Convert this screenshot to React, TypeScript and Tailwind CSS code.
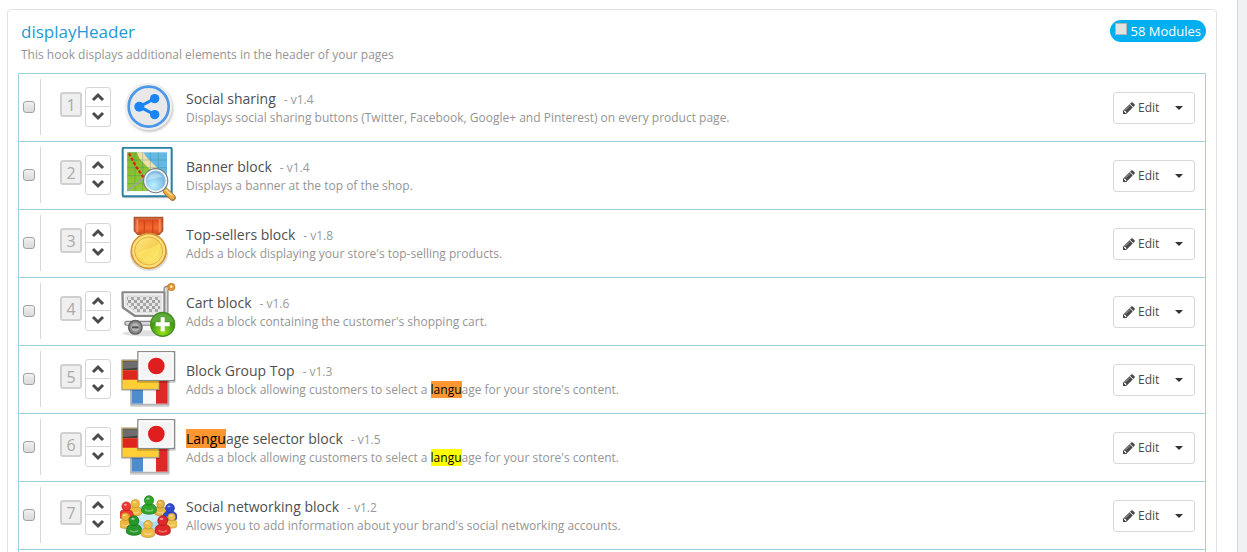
import type { ReactNode } from 'react';

function ShareIcon() {
  return (
    <svg viewBox="360 237 171 171" className="size-[57px] shrink-0" aria-hidden="true">
      <defs>
        <radialGradient id="shareHalo">
          <stop offset="0.86" stopColor="#cfcfcf" />
          <stop offset="1" stopColor="#ffffff" stopOpacity="0" />
        </radialGradient>
      </defs>
      <circle cx="449" cy="325" r="79" fill="url(#shareHalo)" />
      <circle cx="446" cy="320" r="71" fill="#f0eeec" />
      <circle cx="446" cy="320" r="60" fill="#e9e8e8" stroke="#4a98ea" strokeWidth="8" />
      <path d="M464 296L418 320L464 344" fill="none" stroke="#1a84f5" strokeWidth="9" />
      <circle cx="418" cy="320" r="15" fill="#1a84f5" />
      <circle cx="464" cy="296" r="14" fill="#1a84f5" />
      <circle cx="464" cy="344" r="14" fill="#1a84f5" />
    </svg>
  );
}

function MapIcon() {
  return (
    <svg viewBox="30 21 171 171" className="size-[57px] shrink-0" aria-hidden="true">
      <defs>
        <linearGradient id="mapLand" x1="0" y1="0" x2="1" y2="1">
          <stop offset="0" stopColor="#7fb52c" />
          <stop offset="1" stopColor="#9ed83a" />
        </linearGradient>
        <radialGradient id="mapLens" cx="0.4" cy="0.7">
          <stop offset="0" stopColor="#b9f1ff" />
          <stop offset="1" stopColor="#7dbbe6" />
        </radialGradient>
      </defs>
      <rect x="36" y="26" width="151" height="149" rx="5" fill="#000" opacity="0.2" />
      <rect x="38" y="23" width="147" height="146" rx="4" fill="#f7fcfd" stroke="#2b7fa1" strokeWidth="6" />
      <rect x="52" y="37" width="119" height="116" fill="#63b9e4" />
      <path d="M52 37H82C87 64 114 70 126 91C142 105 150 129 171 142V153H52Z" fill="url(#mapLand)" />
      <path d="M81 37H101C108 57 130 67 145 89L128 99C118 80 87 66 81 37Z" fill="#f1dfad" />
      <path d="M75 37V153M98 37V153M121 37V153M145 37V153M52 60H171M52 83H171M52 107H171M52 131H171" stroke="#277b69" strokeWidth="2" opacity="0.42" />
      <path d="M52 153L98 116L122 153" fill="none" stroke="#9da6a1" strokeWidth="5" />
      <path d="M57 40L78 79L100 112" fill="none" stroke="#d32b17" strokeWidth="7" strokeDasharray="10 5" />
      <path d="M157 144L170 157" stroke="#8b9297" strokeWidth="9" />
      <path d="M168 154L188 173" stroke="#a67a40" strokeWidth="19" strokeLinecap="round" />
      <path d="M168 153L187 171" stroke="#efac42" strokeWidth="14" strokeLinecap="round" />
      <path d="M168 150L184 165" stroke="#ffe0a0" strokeWidth="4" strokeLinecap="round" />
      <circle cx="137" cy="122" r="34" fill="url(#mapLens)" stroke="#7c8388" strokeWidth="8" />
      <circle cx="137" cy="122" r="32" fill="none" stroke="#eef2f4" strokeWidth="5" />
      <path d="M112 120C113 98 145 91 158 112C143 110 129 118 112 120Z" fill="#fff" opacity="0.35" />
    </svg>
  );
}

function MedalIcon() {
  return (
    <svg viewBox="30 21 171 171" className="size-[57px] shrink-0" aria-hidden="true">
      <defs>
        <linearGradient id="medalGold" x1="0" y1="0" x2="1" y2="1">
          <stop offset="0" stopColor="#ffe985" />
          <stop offset="0.5" stopColor="#f6cf55" />
          <stop offset="1" stopColor="#ffec72" />
        </linearGradient>
        <linearGradient id="medalRibbon" x1="0" y1="0" x2="0" y2="1">
          <stop offset="0" stopColor="#d94418" />
          <stop offset="0.6" stopColor="#f46a2d" />
          <stop offset="1" stopColor="#d84a1c" />
        </linearGradient>
      </defs>
      <ellipse cx="117" cy="137" rx="57" ry="52" fill="#000" opacity="0.13" />
      <path d="M73 28H158V68L148 79H83L73 68Z" fill="url(#medalRibbon)" stroke="#a8542f" strokeWidth="4" />
      <path d="M82 31V73M149 31V73" stroke="#f58a5c" strokeWidth="6" />
      <path d="M103 37V75M128 37V75" stroke="#cf451f" strokeWidth="4" />
      <path d="M75 32H156" stroke="#cf6740" strokeWidth="5" />
      <circle cx="116" cy="129" r="52" fill="#ffdf7b" stroke="#d59435" strokeWidth="5" />
      <circle cx="116" cy="129" r="42" fill="url(#medalGold)" stroke="#ddb04b" strokeWidth="3" />
      <path d="M81 137C99 121 127 124 151 105C151 158 105 186 81 137Z" fill="#fff06c" opacity="0.45" />
    </svg>
  );
}

function CartIcon() {
  return (
    <svg viewBox="30 21 171 171" className="size-[57px] shrink-0" aria-hidden="true">
      <defs>
        <pattern id="cartMesh" width="18" height="18" patternUnits="userSpaceOnUse">
          <rect width="18" height="18" fill="#e6e6e6" />
          <rect width="9" height="9" fill="#a0a0a0" />
          <rect x="9" y="9" width="9" height="9" fill="#a8a8a8" />
        </pattern>
        <radialGradient id="cartAdd" cx="0.5" cy="0.8">
          <stop offset="0" stopColor="#9ce51b" />
          <stop offset="1" stopColor="#3e9914" />
        </radialGradient>
      </defs>
      <ellipse cx="105" cy="172" rx="68" ry="9" fill="#000" opacity="0.12" />
      <path d="M50 142H128L168 108V38L183 32" fill="none" stroke="#858585" strokeWidth="15" strokeLinejoin="round" strokeLinecap="round" />
      <path d="M50 142H128L168 108V38L183 32" fill="none" stroke="#d8d8d8" strokeWidth="8" strokeLinejoin="round" strokeLinecap="round" />
      <path d="M38 50H162V119H74L39 94Z" fill="#cfcfcf" stroke="#888" strokeWidth="8" strokeLinejoin="round" />
      <path d="M43 54H158V114H77L44 91Z" fill="#e2e2e2" stroke="#f6f6f6" strokeWidth="4" />
      <path d="M51 62H150V108H78L51 86Z" fill="url(#cartMesh)" />
      <circle cx="184" cy="33" r="11" fill="#e59532" stroke="#b67325" strokeWidth="2" />
      <circle cx="184" cy="32" r="4" fill="#fff1c7" />
      <circle cx="76" cy="154" r="20" fill="#8d8d8d" stroke="#666" strokeWidth="5" />
      <circle cx="76" cy="154" r="12" fill="#b4b4b4" />
      <path d="M66 154H86" stroke="#555" strokeWidth="6" />
      <circle cx="158" cy="145" r="36" fill="url(#cartAdd)" stroke="#4b8d26" strokeWidth="4" />
      <path d="M125 141C128 103 187 104 191 141C170 133 149 134 125 141Z" fill="#fff" opacity="0.16" />
      <path d="M158 124V166M137 145H179" stroke="#fff" strokeWidth="12" />
    </svg>
  );
}

function FlagsIcon() {
  return (
    <svg viewBox="30 21 171 171" className="size-[57px] shrink-0" aria-hidden="true">
      <rect x="60" y="107" width="119" height="81" rx="3" fill="#000" opacity="0.2" />
      <rect x="63" y="106" width="112" height="75" fill="#f8f8f8" stroke="#aaa" strokeWidth="3" />
      <path d="M65 108H99V179H65Z" fill="#4c8ccf" />
      <path d="M138 108H173V179H138Z" fill="#df2928" />
      <rect x="33" y="47" width="117" height="94" rx="3" fill="#000" opacity="0.18" />
      <rect x="36" y="48" width="111" height="88" fill="#ffcf35" stroke="#a89a84" strokeWidth="3" />
      <path d="M38 50H145V79H38Z" fill="#444" />
      <path d="M38 79H145V107H38Z" fill="#dc261e" />
      <path d="M39 52H145V65L39 75Z" fill="#fff" opacity="0.22" />
      <rect x="81" y="21" width="116" height="95" rx="3" fill="#000" opacity="0.22" />
      <rect x="84" y="23" width="109" height="86" fill="#f4f4f4" stroke="#8c8c8c" strokeWidth="4" />
      <rect x="88" y="27" width="101" height="78" fill="none" stroke="#fff" strokeWidth="4" />
      <circle cx="139" cy="66" r="25" fill="#df1f1f" />
    </svg>
  );
}

function Person({ x, y, color, dark, scale = 1 }: { x: number; y: number; color: string; dark: string; scale?: number }) {
  return (
    <g transform={`translate(${x} ${y}) scale(${scale})`}>
      <path d="M-21 35C-25 22-17 11-7 11H7C17 11 25 22 21 35C12 44-12 44-21 35Z" fill={color} stroke={dark} strokeWidth="2" />
      <circle cx="0" cy="0" r="14" fill={color} stroke={dark} strokeWidth="2" />
      <ellipse cx="-3" cy="-5" rx="5" ry="3" fill="#fff" opacity="0.5" />
      <path d="M-12 25Q0 34 12 25V31Q0 37-12 31Z" fill="#fff" opacity="0.35" />
    </g>
  );
}

function PeopleIcon() {
  return (
    <svg viewBox="30 15 171 171" className="size-[57px] shrink-0" aria-hidden="true">
      <ellipse cx="116" cy="106" rx="66" ry="36" fill="#a9dcf2" />
      <ellipse cx="116" cy="101" rx="42" ry="20" fill="#d0eefa" />
      <Person x={76} y={65} color="#eebb3c" dark="#b78521" scale={0.88} />
      <Person x={152} y={66} color="#e4b343" dark="#a87c25" scale={0.85} />
      <Person x={117} y={55} color="#31a62b" dark="#187617" />
      <Person x={49} y={73} color="#ed3932" dark="#b41f1a" scale={0.95} />
      <Person x={180} y={78} color="#3049d2" dark="#172c98" scale={0.95} />
      <Person x={46} y={104} color="#ecb53a" dark="#b88120" scale={0.85} />
      <Person x={185} y={105} color="#efc14d" dark="#b58729" scale={0.8} />
      <Person x={72} y={116} color="#27972a" dark="#126b18" scale={1.05} />
      <Person x={158} y={116} color="#df292a" dark="#a81519" scale={1.05} />
      <Person x={114} y={128} color="#efbd45" dark="#b58725" scale={0.92} />
    </svg>
  );
}

function PencilIcon() {
  return (
    <svg viewBox="0 0 1792 1792" className="size-[14px]" fill="currentColor" aria-hidden="true">
      <path d="M491 1536l91-91-235-235-91 91v107h128v128h107zm523-928q0-22-22-22-10 0-17 7l-542 542q-7 7-7 17 0 22 22 22 10 0 17-7l542-542q7-7 7-17zm-54-192l416 416-832 832h-416v-416zm683 96q0 53-37 90l-166 166-416-416 166-165q36-38 90-38 53 0 91 38l235 234q37 39 37 91z" />
    </svg>
  );
}

function Chevron({ up = false }: { up?: boolean }) {
  return (
    <svg viewBox="0 0 14 10" className="h-[10px] w-[14px]" fill="none" stroke="#4a4a4a" strokeWidth="3" aria-hidden="true">
      <path d={up ? 'M2 8L7 3L12 8' : 'M2 2L7 7L12 2'} />
    </svg>
  );
}

const checkbox =
  'size-3 shrink-0 appearance-none rounded-[3px] border border-[#a3a3a3] bg-linear-to-b from-[#f0f0f0] to-[#dadada] checked:bg-none checked:bg-[#00aff0]';

function Orange({ children }: { children: ReactNode }) {
  return <mark className="bg-[#ff9632] text-black">{children}</mark>;
}

function Yellow({ children }: { children: ReactNode }) {
  return <mark className="bg-[#ffff00] text-black">{children}</mark>;
}

interface Module {
  id: string;
  icon: ReactNode;
  name: ReactNode;
  version: string;
  description: ReactNode;
}

const modules: Module[] = [
  { id: 'social-sharing', icon: <ShareIcon />, name: 'Social sharing', version: 'v1.4', description: 'Displays social sharing buttons (Twitter, Facebook, Google+ and Pinterest) on every product page.' },
  { id: 'banner', icon: <MapIcon />, name: 'Banner block', version: 'v1.4', description: 'Displays a banner at the top of the shop.' },
  { id: 'top-sellers', icon: <MedalIcon />, name: 'Top-sellers block', version: 'v1.8', description: "Adds a block displaying your store's top-selling products." },
  { id: 'cart', icon: <CartIcon />, name: 'Cart block', version: 'v1.6', description: "Adds a block containing the customer's shopping cart." },
  {
    id: 'group-top', icon: <FlagsIcon />, name: 'Block Group Top', version: 'v1.3',
    description: <>Adds a block allowing customers to select a <Orange>langu</Orange>age for your store's content.</>,
  },
  {
    id: 'language', icon: <FlagsIcon />, name: <><Orange>Langu</Orange>age selector block</>, version: 'v1.5',
    description: <>Adds a block allowing customers to select a <Yellow>langu</Yellow>age for your store's content.</>,
  },
  { id: 'social-networking', icon: <PeopleIcon />, name: 'Social networking block', version: 'v1.2', description: "Allows you to add information about your brand's social networking accounts." },
];

function ModuleRow({ module, position }: { module: Module; position: number }) {
  return (
    <li className="flex h-[68px] items-center border-b border-[#9fd0dc] pr-[10px] pl-1">
      <div className="mb-[2px] flex h-14 items-center">
        <input type="checkbox" id={module.id} className={checkbox} />
      </div>
      <div className="mb-[2px] ml-[5px] flex h-14 items-center border-l border-[#d8d8d8] pl-[19px]">
        <span className="mb-1 flex h-[25px] w-[22px] items-center justify-center rounded-[3px] border-2 border-[#d0d0d0] bg-[#efefef] text-base text-[#aaa]">
          {position}
        </span>
        <div className="ml-[3px] flex w-[26px] flex-col divide-y divide-[#d6d6d6] rounded-[3px] border border-[#d6d6d6]">
          <button type="button" aria-label="Move up" className="flex h-[19px] items-center justify-center">
            <Chevron up />
          </button>
          <button type="button" aria-label="Move down" className="flex h-[19px] items-center justify-center">
            <Chevron />
          </button>
        </div>
      </div>
      <div className="ml-[9px]">{module.icon}</div>
      <div className="ml-[9px] min-w-0 flex-1">
        <label htmlFor={module.id} className="block text-sm leading-[19px] text-[#4f4f4f]">
          {module.name}
          <span className="ml-2 text-xs text-[#999]">- {module.version}</span>
        </label>
        <p className="truncate text-xs leading-[19px] text-[#959595]">{module.description}</p>
      </div>
      <div className="flex h-8 w-[82px] shrink-0 rounded-[3px] border border-[#d8d8d8] text-xs text-[#4a4a4a]">
        <button type="button" className="flex items-center gap-[2px] pl-2">
          <PencilIcon />
          Edit
        </button>
        <button type="button" aria-label="More actions" className="flex flex-1 items-center justify-center pl-1">
          <svg viewBox="0 0 8 4" className="mt-px h-1 w-2" aria-hidden="true">
            <path d="M0 0H8L4 4Z" fill="#333" />
          </svg>
        </button>
      </div>
    </li>
  );
}

export default function App() {
  return (
    <div className="h-screen overflow-hidden bg-[#eff1f2] pr-[9px] font-['Open_Sans',sans-serif]">
      <main className="min-h-full border-r border-[#d3d8db] bg-white pt-[9px] pr-5 pl-[7px]">
        <section className="rounded-[4px] border border-[#e2e2e2] px-[10px] pt-[10px] pb-5">
          <header className="flex items-start justify-between">
            <div className="pl-[3px]">
              <h1 className="text-[17px] leading-6 text-[#2399d5]">displayHeader</h1>
              <p className="mb-[7px] text-xs leading-[22px] text-[#959595]">This hook displays additional elements in the header of your pages</p>
            </div>
            <label className="flex h-[22px] items-center gap-1 rounded-full bg-[#00aff0] px-[5px] text-[13px] font-medium text-white">
              <input type="checkbox" className="mb-1 size-3 shrink-0 appearance-none border border-[#b5b5b5] bg-[#e2e2e2] checked:bg-[#777]" />
              <span className="pt-[2px]">58 Modules</span>
            </label>
          </header>
          <ul className="h-[600px] border border-[#9fd0dc]">
            {modules.map((module, index) => (
              <ModuleRow key={module.id} module={module} position={index + 1} />
            ))}
          </ul>
        </section>
      </main>
    </div>
  );
}
